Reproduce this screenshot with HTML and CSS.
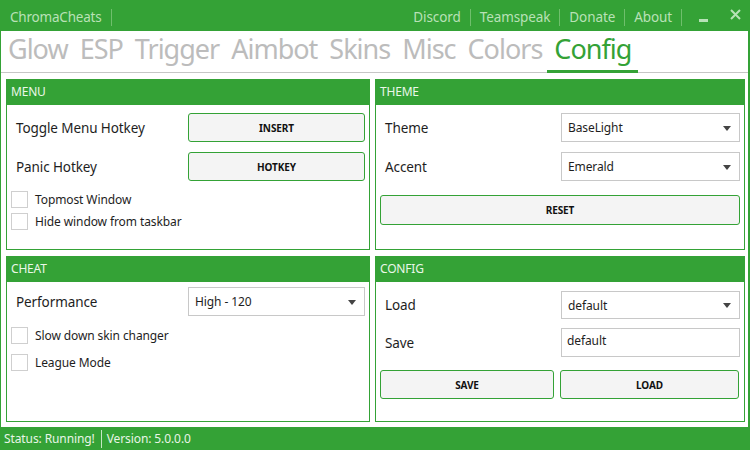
FILE: index.html
```html
<!DOCTYPE html>
<html>
<head>
<meta charset="utf-8">
<link rel="stylesheet" href="styles.css">
</head>
<body>
<div class="window">
  <div class="titlebar">
    <span class="brand">ChromaCheats</span>
    <span class="sep"></span>
    <span class="spacer"></span>
    <span class="link">Discord</span><span class="sep"></span>
    <span class="link">Teamspeak</span><span class="sep"></span>
    <span class="link">Donate</span><span class="sep"></span>
    <span class="link">About</span><span class="sep"></span>
    <span class="winbtn min"><span class="minbar"></span></span>
    <span class="winbtn close">
      <svg width="11" height="11" viewBox="0 0 11 11"><path d="M1 1L10 10M10 1L1 10" stroke="#b7e2b7" stroke-width="2"/></svg>
    </span>
  </div>
  <div class="tabs">
    <span class="tab">Glow</span>
    <span class="tab">ESP</span>
    <span class="tab">Trigger</span>
    <span class="tab">Aimbot</span>
    <span class="tab">Skins</span>
    <span class="tab">Misc</span>
    <span class="tab">Colors</span>
    <span class="tab active">Config</span>
  </div>
  <div class="panels">
    <section class="panel">
      <div class="phead">MENU</div>
      <div class="pbody">
        <div class="row r-first"><span class="label">Toggle Menu Hotkey</span><button class="btn ctl">INSERT</button></div>
        <div class="row r-next"><span class="label">Panic Hotkey</span><button class="btn ctl">HOTKEY</button></div>
        <label class="check c-first"><span class="box"></span>Topmost Window</label>
        <label class="check c-next"><span class="box"></span>Hide window from taskbar</label>
      </div>
    </section>
    <section class="panel">
      <div class="phead">THEME</div>
      <div class="pbody">
        <div class="row r-first"><span class="label">Theme</span><div class="select ctl wide">BaseLight<span class="arrow"></span></div></div>
        <div class="row r-next"><span class="label">Accent</span><div class="select ctl wide">Emerald<span class="arrow"></span></div></div>
        <button class="btn full reset">RESET</button>
      </div>
    </section>
    <section class="panel">
      <div class="phead">CHEAT</div>
      <div class="pbody">
        <div class="row r-cheat"><span class="label">Performance</span><div class="select ctl">High - 120<span class="arrow"></span></div></div>
        <label class="check c-cheat"><span class="box"></span>Slow down skin changer</label>
        <label class="check c-cheat2"><span class="box"></span>League Mode</label>
      </div>
    </section>
    <section class="panel">
      <div class="phead">CONFIG</div>
      <div class="pbody">
        <div class="row r-load"><span class="label">Load</span><div class="select ctl wide tall28">default<span class="arrow"></span></div></div>
        <div class="row r-save"><span class="label">Save</span><div class="input ctl wide">default</div></div>
        <div class="btnrow"><button class="btn">SAVE</button><button class="btn">LOAD</button></div>
      </div>
    </section>
  </div>
  <div class="status">
    <span>Status: Running!</span><span class="ssep"></span><span>Version: 5.0.0.0</span>
  </div>
</div>
</body>
</html>
```
FILE: styles.css
```css
* { box-sizing: border-box; }
html, body { margin: 0; padding: 0; background: #fff; }
body { font-family: "Noto Sans", "Open Sans", sans-serif; color: #1e1e1e; }

.window {
  width: 750px;
  height: 450px;
  border-left: 1px solid #34a236;
  border-right: 2px solid #34a236;
  display: flex;
  flex-direction: column;
  overflow: hidden;
  background: #fff;
}

.titlebar {
  height: 31px;
  flex: none;
  background: #34a236;
  display: flex;
  align-items: center;
  padding-left: 9px;
  padding-top: 3px;
  color: #b9e1b6;
  font-size: 13.5px;
}
.brand { letter-spacing: -0.2px; }
.spacer { flex: 1; }
.sep {
  width: 1px;
  height: 17px;
  background: #6fbf6c;
  margin: 0 9px;
}
.link { letter-spacing: -0.1px; }
.winbtn { display: flex; align-items: center; justify-content: center; height: 20px; }
.min { width: 18px; margin-left: 3px; }
.minbar { display: block; width: 9px; height: 3px; background: #b7e2b7; margin-top: 6px; }
.close { width: 20px; margin-left: 13px; margin-right: 3px; margin-top: -6px; }

.tabs {
  height: 42px;
  flex: none;
  border-bottom: 1px solid #c6c6c6;
  display: flex;
  align-items: flex-end;
  padding-left: 7px;
  gap: 12px;
}
.tab {
  font-size: 27px;
  color: #bcbcbc;
  line-height: 36px;
  letter-spacing: -1px;
  padding-bottom: 3px;
  border-bottom: 3px solid transparent;
  margin-bottom: -1px;
}
.tab.active {
  color: #34a236;
  border-bottom-color: #34a236;
  padding: 0 7px 3px 7px;
  margin-left: -7px;
}

.panels {
  display: grid;
  grid-template-columns: 364px 370px;
  grid-template-rows: 171px 166px;
  column-gap: 5px;
  row-gap: 6px;
  padding: 6px 0 0 5px;
}
.panel {
  border: 1px solid #34a236;
  display: flex;
  flex-direction: column;
}
.phead {
  height: 25px;
  background: #34a236;
  color: #eaf7e8;
  font-size: 12px;
  line-height: 24px;
  padding-left: 4px;
  letter-spacing: -0.2px;
}
.pbody { padding: 0 4px; display: flex; flex-direction: column; }

.row { display: flex; align-items: center; }
.label { flex: 1; padding-left: 5px; font-size: 13.5px; letter-spacing: -0.1px; color: #1e1e1e; }
.ctl { width: 177px; height: 29px; flex: none; }
.ctl.wide { width: 179px; }
.r-first { margin-top: 8px; }
.r-next { margin-top: 10px; }
.r-cheat { margin-top: 5px; }
.r-load { margin-top: 9px; }
.r-save { margin-top: 9px; }

.btn {
  font-family: "Noto Sans", "Open Sans", sans-serif;
  font-weight: bold;
  font-size: 10px;
  color: #111;
  background: #f4f4f4;
  border: 1px solid #34a236;
  border-radius: 3px;
  padding: 0;
  letter-spacing: -0.1px;
}
.full { height: 30px; }
.reset { margin-top: 14px; }
.btnrow { display: flex; gap: 6px; margin-top: 13px; }
.btnrow .btn { height: 29px; }
.btnrow .btn:first-child { width: 174px; }
.btnrow .btn:last-child { width: 179px; }

.select, .input {
  border: 1px solid #c8c8c8;
  background: #fff;
  font-size: 12px;
  padding-left: 6px;
  color: #1e1e1e;
  letter-spacing: -0.1px;
}
.select { display: flex; align-items: center; position: relative; }
.tall28 { height: 28px; }
.input { padding-top: 3px; padding-left: 5px; }
.arrow {
  position: absolute;
  right: 8px;
  top: 50%;
  margin-top: -2px;
  width: 0; height: 0;
  border-left: 4px solid transparent;
  border-right: 4px solid transparent;
  border-top: 5px solid #444;
}

.check {
  display: flex;
  align-items: center;
  font-size: 12px;
  letter-spacing: -0.1px;
  color: #1e1e1e;
  height: 17px;
}
.box {
  width: 17px; height: 17px;
  border: 1px solid #cfcfcf;
  background: #fff;
  margin-right: 7px;
}
.c-first { margin-top: 10px; }
.c-next { margin-top: 5px; }
.c-cheat { margin-top: 11px; }
.c-cheat2 { margin-top: 10px; }

.status {
  margin-top: auto;
  height: 23px;
  flex: none;
  background: #34a236;
  color: #e8f5e6;
  font-size: 12px;
  display: flex;
  align-items: center;
  padding-left: 3px;
  letter-spacing: -0.1px;
}
.ssep { width: 1px; height: 18px; background: #c5e6c3; margin: 0 5px 0 6px; }
```
